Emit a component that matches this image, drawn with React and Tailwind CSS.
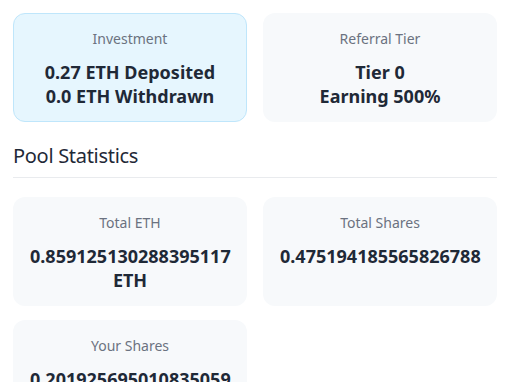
import React from "react";

// ─── 카드 ─────────────────────────────────────────────────────────────────────
function StatCard({ label, children, highlight }) {
  return (
    <div
      className={`rounded-xl px-4 pt-[15px] pb-[13px] text-center ${
        highlight
          ? "bg-[#e6f6fe] border border-[#bfe6fb]"
          : "bg-[#f7f9fb] border border-transparent"
      }`}
    >
      <div className="text-[14px] leading-5 text-[#6b7280]">{label}</div>
      <div className="mt-[11px] text-[18px] leading-6 font-bold text-[#1f2937]">
        {children}
      </div>
    </div>
  );
}

// ─── 메인 ─────────────────────────────────────────────────────────────────────
export default function App() {
  return (
    <div
      className="w-[521px] h-[382px] overflow-hidden bg-white pl-[13px] pr-[24px] pt-[13px]"
      style={{ fontFamily: '"Noto Sans", "Open Sans", Arial, sans-serif' }}
    >
      <div className="grid grid-cols-2 gap-4">
        <StatCard label="Investment" highlight>
          <div>0.27 ETH Deposited</div>
          <div>0.0 ETH Withdrawn</div>
        </StatCard>
        <StatCard label="Referral Tier">
          <div>Tier 0</div>
          <div>Earning 500%</div>
        </StatCard>
      </div>

      {/* Pool Statistics */}
      <h2 className="mt-5 pb-[7px] border-b border-[#e9ebee] text-[20px] leading-7 tracking-[-0.3px] text-[#1f2937]">
        Pool Statistics
      </h2>

      <div className="mt-[19px] grid grid-cols-2 gap-x-4 gap-y-[14px]">
        <StatCard label="Total ETH">0.859125130288395117 ETH</StatCard>
        <StatCard label="Total Shares">0.475194185565826788</StatCard>
        <StatCard label="Your Shares">0.201925695010835059</StatCard>
      </div>
    </div>
  );
}
